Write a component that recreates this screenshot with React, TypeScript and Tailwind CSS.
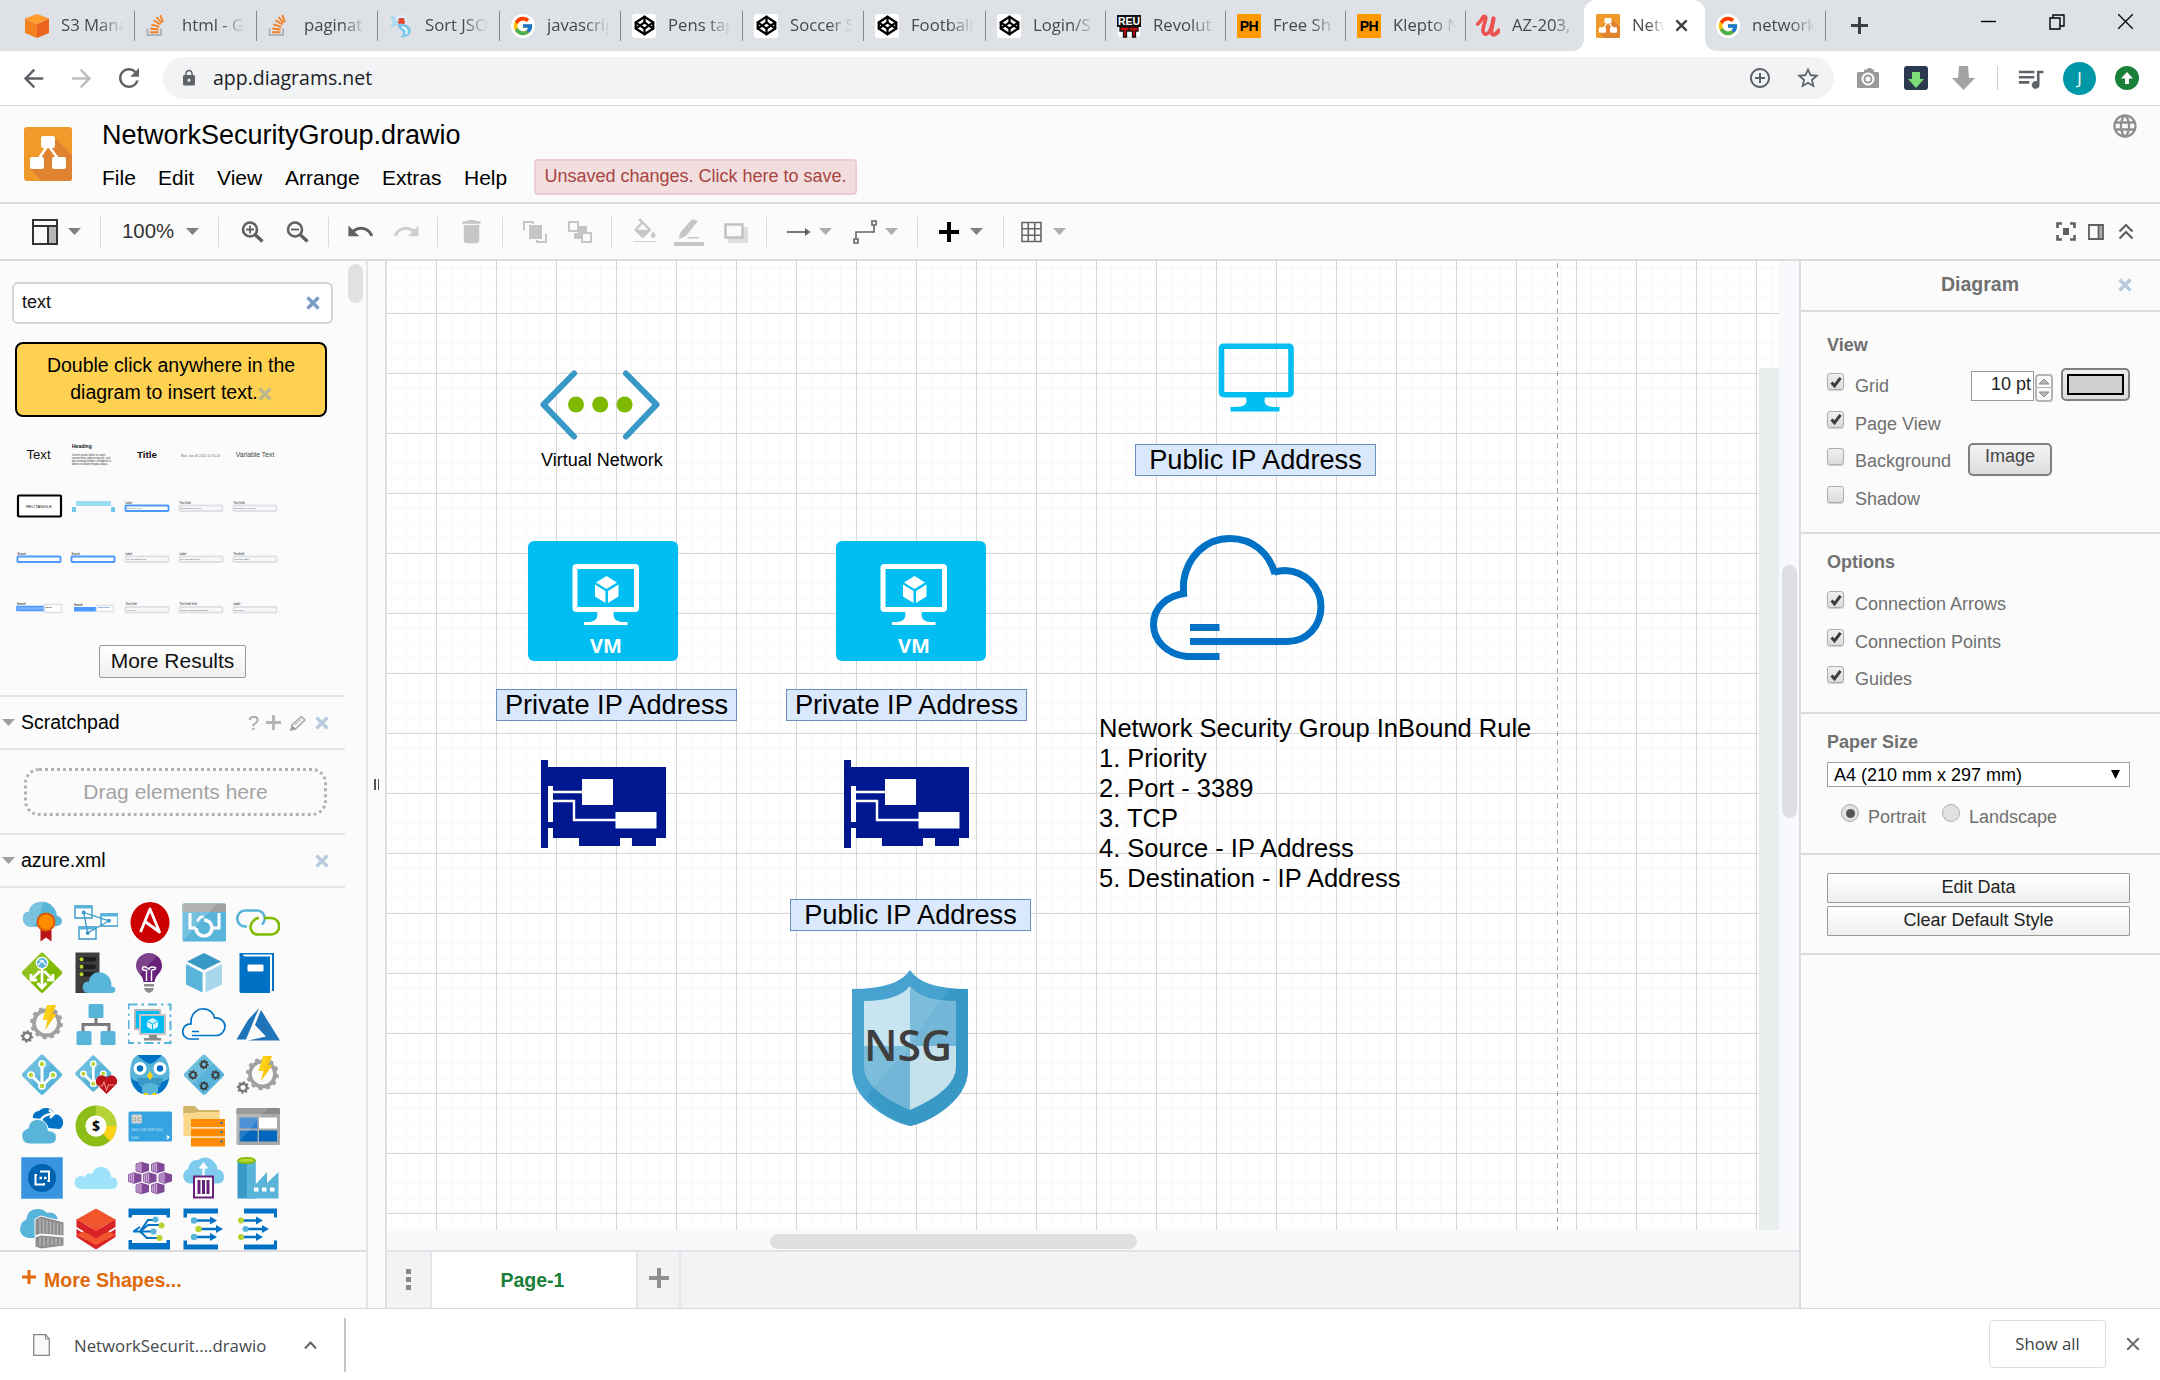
import React from "react";
import {
  MdArrowBack, MdArrowForward, MdRefresh, MdLock, MdStarBorder, MdQueueMusic, MdAddCircleOutline,
  MdLanguage, MdUndo, MdRedo, MdDelete, MdClose, MdFormatColorFill,
} from "react-icons/md";
import { FcGoogle } from "react-icons/fc";
import { FiCodepen } from "react-icons/fi";

type Kids = { children?: React.ReactNode };

/* ---------- Favicons ---------- */

const DrawioMark = ({ className }: { className: string }) => (
  <svg className={className} viewBox="0 0 48 54" preserveAspectRatio="none">
    <rect width="48" height="54" rx="3" fill="#f19a2c" />
    <path d="M30 10L48 28V51a3 3 0 0 1-3 3H17L7 42l16-20z" fill="#e08330" />
    <path d="M24 18L14 33M24 18l11 15" stroke="#fff" strokeWidth="2.6" />
    <rect x="17" y="9" width="14" height="12" rx="2" fill="#fff" />
    <rect x="6" y="30" width="14" height="12" rx="2" fill="#fff" />
    <rect x="28" y="30" width="14" height="12" rx="2" fill="#fff" />
  </svg>
);

const S3Icon = () => (
  <svg className="size-6" viewBox="0 0 24 24">
    <path d="M12 0l12 4.5-12 6L0 4.5z" fill="#ff9c2a" />
    <path d="M0 4.5l12 6V24L0 19z" fill="#f58220" />
    <path d="M24 4.5l-12 6V24l12-5z" fill="#ea6420" />
  </svg>
);
const StackIcon = () => (
  <svg className="size-6" viewBox="0 0 24 24" fill="none">
    <path d="M1.500 14.500V21h13.500v-6.500" stroke="#b0b3b8" strokeWidth="2" />
    <path d="M4.200 18.200h8.300M4.300 14.500l8.300 1M5.300 10.300l8 2.500M7.500 6.300l7 4.200M10.500 3l5 6M14.200 1.200l2.800 7" stroke="#f48024" strokeWidth="1.900" />
  </svg>
);
const GenieIcon = () => (
  <svg className="size-6" viewBox="0 0 24 24">
    <path d="M1 1l6 2-2 4 5-1-3 6-6 2 3-6z" fill="#a9dbf2" />
    <path d="M8 2c2-2 7-2 9 0l1 5-4 4-5-3z" fill="#d9eef8" />
    <path d="M10 4h5l1 5-3 3-4-3z" fill="#e4462f" />
    <path d="M9 10c7-1 12 2 13 6 0 6-6 8-11 7 3-1 4-4 2-6s-5-4-4-7z" fill="#7cc7ec" />
    <path d="M13 13c4 1 6 4 4 7" stroke="#fff" strokeWidth="1.800" fill="none" />
  </svg>
);
const GoogleIcon = () => (
  <span className="flex size-6 items-center justify-center rounded-full bg-white"><FcGoogle className="size-[22px]" /></span>
);
const CodepenIcon = () => (
  <span className="flex size-6 items-center justify-center rounded-[3px] bg-white"><FiCodepen className="size-[21px] text-black" strokeWidth={2.600} /></span>
);
const RevIcon = () => (
  <svg className="size-6" viewBox="0 0 24 24">
    <path d="M0 1h24v12H0z" fill="#111" />
    <path d="M1 13h22v9.500H1z" fill="#fff" />
    <text x="12" y="11" fontSize="10.500" fontWeight="900" textAnchor="middle" fill="#fff" fontFamily="Liberation Sans, sans-serif">REU</text>
    <path d="M3 13h9v4H9.500v6h-3v-6H3zM12 13h9v4h-2.500v6h-3v-6H12z" fill="#c60b0b" stroke="#111" strokeWidth="1.300" />
  </svg>
);
const PhIcon = () => (
  <span className="flex size-6 items-center justify-center bg-[#ff9900] font-['Liberation_Sans',sans-serif] text-[14px] font-bold leading-none tracking-[-0.500px] text-black">PH</span>
);
const UdemyIcon = () => (
  <svg className="size-6" viewBox="0 0 24 24" fill="none">
    <path d="M1.500 10c2.500-1.500 4-4 5.500-7 1.500-1.500 3.500-.5 2.500 2.500L7.500 13c-1.500 6 1 8.500 4 6.500 3-2 4-7 5-10" stroke="#ec5252" strokeWidth="3.600" strokeLinecap="round" />
    <path d="M17.500 4.500L15.500 15c-.6 4 .5 6 3 5.500 2-.5 3.500-2.500 4.500-4" stroke="#ec5252" strokeWidth="4.200" strokeLinecap="round" />
  </svg>
);

const CloseGlyph = ({ className }: { className: string }) => (
  <svg className={className} viewBox="0 0 14 14"><path d="M1.500 1.500l11 11M12.500 1.500l-11 11" stroke="currentColor" strokeWidth="2.500" /></svg>
);

const Tab = ({ icon, children, width = "w-[121px]" }: Kids & { icon: React.ReactNode; width?: string }) => (
  <div className={`flex h-full shrink-0 items-center ${width}`}>
    <span className="ml-[11px] flex size-6 shrink-0">{icon}</span>
    <span className="mb-0.5 ml-3 shrink-0 whitespace-nowrap text-[16.7px] text-[#45494d] [mask-image:linear-gradient(to_right,#000_38px,transparent_63px)]">{children}</span>
    <span className="ml-auto h-[30px] w-[1.5px] bg-[#85898e]" />
  </div>
);

const TabStrip = () => (
  <div className="flex h-[51px] shrink-0 items-center bg-[#dee1e6] pl-[14px]">
    <Tab icon={<S3Icon />}>S3 Mana</Tab>
    <Tab icon={<StackIcon />} width="w-[122px]">html - G</Tab>
    <Tab icon={<StackIcon />}>paginat</Tab>
    <Tab icon={<GenieIcon />} width="w-[122px]">Sort JSO</Tab>
    <Tab icon={<GoogleIcon />}>javascrip</Tab>
    <Tab icon={<CodepenIcon />} width="w-[122px]">Pens tag</Tab>
    <Tab icon={<CodepenIcon />}>Soccer S</Tab>
    <Tab icon={<CodepenIcon />} width="w-[122px]">Football</Tab>
    <Tab icon={<CodepenIcon />} width="w-[120px]">Login/S</Tab>
    <Tab icon={<RevIcon />} width="w-[120px]">Revolut</Tab>
    <Tab icon={<PhIcon />} width="w-[120px]">Free Sh</Tab>
    <Tab icon={<PhIcon />} width="w-[120px]">Klepto N</Tab>
    <div className="flex h-full w-[118px] items-center">
      <span className="ml-[10px] flex size-6"><UdemyIcon /></span>
      <span className="mb-0.5 ml-3 whitespace-nowrap text-[16.7px] text-[#45494d] [mask-image:linear-gradient(to_right,#000_42px,transparent_64px)]">AZ-203,</span>
    </div>
    <div className="relative flex h-full w-[121px] items-center rounded-t-[12px] bg-white">
      <svg className="absolute -left-3 bottom-0 size-3" viewBox="0 0 12 12"><path d="M12 0v12H0A12 12 0 0 0 12 0z" fill="#fff" /></svg>
      <svg className="absolute -right-3 bottom-0 size-3" viewBox="0 0 12 12"><path d="M0 0v12h12A12 12 0 0 1 0 0z" fill="#fff" /></svg>
      <DrawioMark className="ml-3 size-6 shrink-0" />
      <span className="mb-0.5 ml-3 w-[43px] shrink-0 whitespace-nowrap text-[16.7px] text-[#45494d] [mask-image:linear-gradient(to_right,#000_17px,transparent_33px)]">Netw</span>
      <CloseGlyph className="size-[13px] text-[#3c4043]" />
    </div>
    <Tab icon={<GoogleIcon />}>network</Tab>
    <svg className="ml-[25px] size-[17px]" viewBox="0 0 17 17"><path d="M8.500 0v17M0 8.500h17" stroke="#3c4043" strokeWidth="3" /></svg>
    <div className="ml-auto flex items-center pb-2">
      <svg className="h-5 w-[16px]" viewBox="0 0 16 20"><path d="M0 9.500h15" stroke="#000" strokeWidth="1.400" /></svg>
      <svg className="ml-[52px] size-4" viewBox="0 0 16 16" fill="none" stroke="#000" strokeWidth="1.400"><path d="M1 4h10v11H1zM4 4V1h11v11h-4" /></svg>
      <svg className="ml-[53px] mr-[27px] size-[15px]" viewBox="0 0 15 15" stroke="#000" strokeWidth="1.300"><path d="M0 0l15 15M15 0L0 15" /></svg>
    </div>
  </div>
);

const NavBar = () => (
  <div className="flex h-[55px] shrink-0 items-center border-b border-[#dadce0] bg-white pl-[9px] text-[#5f6368]">
    <span className="flex w-12 justify-center"><MdArrowBack className="size-[29px]" /></span>
    <span className="flex w-12 justify-center"><MdArrowForward className="size-[29px] text-[#bbbdc0]" /></span>
    <span className="flex w-12 justify-center"><MdRefresh className="size-[30px]" /></span>
    <div className="ml-[10px] flex h-[42px] w-[1671px] items-center rounded-full bg-[#f1f3f4]">
      <MdLock className="ml-[17px] size-[18px]" />
      <span className="ml-[15px] text-[19.5px] text-[#202124]">app.diagrams.net</span>
      <span className="ml-auto mr-[19px] flex items-center gap-[23px]">
        <MdAddCircleOutline className="size-6" />
        <MdStarBorder className="mr-[-6px] size-[26px]" />
      </span>
    </div>
    <span className="ml-4 flex w-9 justify-center">
      <svg className="h-5 w-[22px]" viewBox="0 0 22 20"><path d="M1 4h6V1.500h3L11 0h3l1 1.500h2V4h4q1 0 1 1v14q0 1-1 1H1q-1 0-1-1V5q0-1 1-1z" fill="#9a9a9a" /><circle cx="11" cy="11" r="5.500" fill="none" stroke="#fff" strokeWidth="2" /><circle cx="11" cy="11" r="2.500" fill="#fff" /></svg>
    </span>
    <span className="flex w-[60px] justify-center">
      <svg className="size-6" viewBox="0 0 24 24"><rect width="24" height="24" rx="3" fill="#2c3a4f" /><path d="M8 6h8v7h4l-8 9-8-9h4z" fill="#7ddc7a" /></svg>
    </span>
    <span className="flex w-[35px] justify-center">
      <svg className="h-6 w-[23px]" viewBox="0 0 23 24"><path d="M7 0h9l1 12h6L11.500 24 0 12h6z" fill="#a3a3a3" /></svg>
    </span>
    <span className="ml-4 h-6 w-px bg-[#d0d0d0]" />
    <span className="flex w-16 justify-center"><MdQueueMusic className="size-[31px]" /></span>
    <span className="flex w-[35px] justify-center"><span className="flex size-[33px] items-center justify-center rounded-full bg-[#0097a7] text-[17px] text-white">J</span></span>
    <span className="flex w-[60px] justify-center">
      <svg className="size-6" viewBox="0 0 24 24"><circle cx="12" cy="12" r="12" fill="#188038" /><path d="M12 6l6 6.500h-4V18h-4v-5.500H6z" fill="#fff" /></svg>
    </span>
  </div>
);

const Header = () => (
  <div className="flex h-[98px] shrink-0 border-b-2 border-[#dadce0] bg-[#fbfbfb]">
    <DrawioMark className="ml-6 mt-[21px] h-[54px] w-12" />
    <div className="ml-[30px] mt-[12px] flex flex-col">
      <span className="text-[27px] leading-[34px] text-black">NetworkSecurityGroup.drawio</span>
      <div className="mt-[7px] flex h-9 items-center text-[21px] leading-9 text-black">
        <span className="w-[56px] pt-0.5">File</span>
        <span className="w-[59px] pt-0.5">Edit</span>
        <span className="w-[68px] pt-0.5">View</span>
        <span className="w-[97px] pt-0.5">Arrange</span>
        <span className="w-[82px] pt-0.5">Extras</span>
        <span className="w-[70px] pt-0.5">Help</span>
        <span className="flex h-9 w-[323px] items-center justify-center whitespace-nowrap rounded-[4px] border-2 border-[#ebccd1] bg-[#f2dede] pb-[3px] text-[18px] text-[#a94442]">Unsaved changes. Click here to save.</span>
      </div>
    </div>
    <MdLanguage className="ml-auto mr-[21px] mt-[6px] size-[28px] text-[#8f8f8f]" />
  </div>
);

/* ---------- Editor toolbar ---------- */

const Sep = ({ className }: { className: string }) => <span className={`h-[30px] w-px shrink-0 bg-[#dadada] ${className}`} />;
const Caret = ({ className }: { className: string }) => (
  <svg className={`h-[7px] w-[13px] shrink-0 ${className}`} viewBox="0 0 13 7"><path d="M0 0h13L6.500 7z" fill="currentColor" /></svg>
);
const Magnifier = ({ className, plus }: { className: string; plus?: boolean }) => (
  <svg className={`h-[22px] w-[23px] shrink-0 ${className}`} viewBox="0 0 23 22" fill="none" stroke="#606060">
    <circle cx="9" cy="8.500" r="7" strokeWidth="2.600" />
    <path d="M14 13.500l7.500 7" strokeWidth="3.400" />
    <path d={plus ? "M5 8.500h8M9 4.500v8" : "M5 8.500h8"} strokeWidth="1.800" />
  </svg>
);

const Toolbar = () => (
  <div className="flex h-[57px] shrink-0 items-center border-b-2 border-[#dadce0] bg-[#fbfbfb] pl-8 text-[#606060]">
    <svg className="h-[26px] w-[26px] shrink-0" viewBox="0 0 26 26" fill="none" stroke="#333" strokeWidth="2"><path d="M17 8h8v17h-8z" fill="#b5b5b5" stroke="none" /><path d="M1 1h24v24H1zM1 7h24M16 7v18" /></svg>
    <Caret className="ml-[10px] text-[#808080]" />
    <Sep className="ml-[19px]" />
    <span className="ml-[21px] w-[54px] text-[20.400px] text-[#333]">100%</span>
    <Caret className="ml-[10px] text-[#808080]" />
    <Sep className="ml-[19px]" />
    <Magnifier className="ml-[22px]" plus />
    <Magnifier className="ml-[22px]" />
    <Sep className="ml-[19px]" />
    <MdUndo className="ml-[17px] size-[29px] shrink-0" />
    <MdRedo className="ml-[17px] size-[29px] shrink-0 text-[#cfcfcf]" />
    <Sep className="ml-[16px]" />
    <MdDelete className="ml-[18px] size-[31px] shrink-0 text-[#c6c6c6]" />
    <Sep className="ml-[15px]" />
    <svg className="ml-[19px] h-6 w-[26px] shrink-0" viewBox="0 0 26 24"><path d="M7 5h13v14H7z" fill="#c6c6c6" /><path d="M2 10V2h9v2M24 14v8h-9v-2" fill="none" stroke="#c6c6c6" strokeWidth="2" /></svg>
    <svg className="ml-[19px] h-6 w-[26px] shrink-0" viewBox="0 0 26 24"><path d="M11 6h9v6h-5v7H7v-6h4z" fill="#c6c6c6" /><path d="M2 2h9v9H2zM15 13h9v9h-9z" fill="#fbfbfb" stroke="#c6c6c6" strokeWidth="2" /></svg>
    <Sep className="ml-[18px]" />
    <MdFormatColorFill className="ml-[19px] h-[30px] w-[28px] shrink-0 text-[#c6c6c6] [clip-path:inset(0_0_15%_0)]" />
    <svg className="ml-[15px] h-[28px] w-[30px] shrink-0" viewBox="0 0 30 28"><path d="M18 1l6 2-12 15-7 3 1-6zM0 24h30v4H0zM14 19h11v1.500H13z" fill="#c6c6c6" /></svg>
    <svg className="ml-[20px] mt-[3px] h-[20px] w-[25px] shrink-0" viewBox="0 0 25 20"><path d="M4 4h20v16H4z" fill="#dedede" /><path d="M1.500 1.500h17v13h-17z" fill="#fbfbfb" stroke="#c2c2c2" strokeWidth="2.500" /></svg>
    <Sep className="ml-[17px]" />
    <svg className="ml-[20px] h-[12px] w-6 shrink-0" viewBox="0 0 24 12"><path d="M0 6h20" stroke="#606060" strokeWidth="1.700" /><path d="M18 2l5.500 4-5.500 4z" fill="#606060" /></svg>
    <Caret className="ml-2 text-[#adadad]" />
    <svg className="ml-[21px] h-6 w-[26px] shrink-0" viewBox="0 0 26 24" fill="none" stroke="#666" strokeWidth="1.600"><path d="M3 19v-7h18V5M1 19h4v4H1zM19 1h4v4h-4z" /></svg>
    <Caret className="ml-[6px] text-[#adadad]" />
    <Sep className="ml-[19px]" />
    <svg className="ml-[20px] size-[22px] shrink-0" viewBox="0 0 22 22"><path d="M9 1h4v8h8v4h-8v8H9v-8H1V9h8z" fill="#000" /></svg>
    <Caret className="ml-[10px] text-[#808080]" />
    <Sep className="ml-[20px]" />
    <svg className="ml-[17px] size-[22px] shrink-0" viewBox="0 0 22 22" fill="none" stroke="#666" strokeWidth="1.600"><path d="M1 1.500h19v19H1zM1 7.800h19M1 14.200h19M7.300 1.500v19M13.700 1.500v19" /></svg>
    <Caret className="ml-[10px] text-[#adadad]" />
    <svg className="ml-auto h-[19px] w-5 shrink-0" viewBox="0 0 20 19"><path d="M1.500 6V1.500H6M14 1.500h4.500V6M18.500 13v4.500H14M6 17.500H1.500V13" fill="none" stroke="#606060" strokeWidth="2.600" /><path d="M7 6h6v7H7z" fill="#606060" /></svg>
    <svg className="ml-[12px] size-4 shrink-0" viewBox="0 0 16 16"><path d="M11 1h4v14h-4z" fill="#aaa" /><path d="M1 1h14v14H1zM10.500 1v14" fill="none" stroke="#606060" strokeWidth="1.800" /></svg>
    <svg className="ml-[14px] mr-[26px] h-[17px] w-4 shrink-0" viewBox="0 0 16 17" fill="none" stroke="#606060" strokeWidth="2.200"><path d="M1.500 8.500L8 2l6.500 6.500M1.500 15.500L8 9l6.500 6.500" /></svg>
  </div>
);

/* ---------- Sidebar ---------- */

const Cross = ({ className }: { className: string }) => (
  <svg className={`shrink-0 ${className}`} viewBox="0 0 14 14"><path d="M1.500 1.500l11 11M12.500 1.500l-11 11" stroke="currentColor" strokeWidth="3.400" /></svg>
);

const Thumb = ({ children }: Kids) => (
  <svg className="h-[50px] w-[54px]" viewBox="0 0 54 50" fontFamily="Liberation Sans, sans-serif">{children}</svg>
);

const Field = ({ y, label, value, blue = false, x = 5.5, w = 43 }: { y: number; label: string; value?: string; blue?: boolean; x?: number; w?: number }) => (
  <>
    <text x={x} y={y - 2} fontSize="2.600" fontWeight="bold" fill="#555">{label}</text>
    <rect x={x} y={y} width={w} height="5.500" rx="0.800" fill={blue ? "#fff" : "#f7f8fa"} stroke={blue ? "#4c9aff" : "#dfe1e6"} strokeWidth="1.900" />
    {value ? <text x={x + 1} y={y + 3.5} fontSize="2.500" fill="#555">{value}</text> : null}
  </>
);

const Thumbs = () => (
  <div className="ml-3 mt-[13px] grid h-[200px] w-[270px] grid-cols-5">
    <Thumb><text x="26.500" y="28.500" fontSize="13.200" textAnchor="middle" fill="#111">Text</text></Thumb>
    <Thumb>
      <text x="6" y="18" fontSize="5" fontWeight="bold" fill="#111">Heading</text>
      <g fontSize="2.700" fill="#333">
        <text x="6" y="26" textLength="34">Lorem ipsum dolor sit amet,</text>
        <text x="6" y="29" textLength="38">consectetur adipisicing elit, sed</text>
        <text x="6" y="32" textLength="39">do eiusmod tempor incididunt ut</text>
        <text x="6" y="35" textLength="36">labore et dolore magna aliqua.</text>
      </g>
    </Thumb>
    <Thumb><text x="27" y="28" fontSize="9.800" fontWeight="bold" textAnchor="middle" fill="#111">Title</text></Thumb>
    <Thumb><text x="7" y="26.500" fontSize="3" fill="#666" textLength="39">Mon Jan 06 2020 10:55:24</text></Thumb>
    <Thumb><text x="27" y="27" fontSize="6.800" textAnchor="middle" fill="#444">Variable Text</text></Thumb>

    <Thumb>
      <rect x="6" y="15.500" width="43" height="21" rx="1" fill="#fff" stroke="#000" strokeWidth="2.200" />
      <text x="14" y="27.500" fontSize="4.400" fill="#222" textLength="26">RECTANGLE</text>
    </Thumb>
    <Thumb><path d="M10 21h35v5H10z" fill="#9adcf2" /><path d="M6 27h4v5H6zM45 27h4v5h-4z" fill="#6fcbe6" /></Thumb>
    <Thumb><Field y={25.5} label="Label" value="Selected Text" blue /></Thumb>
    <Thumb><Field y={25.5} label="Text field" value="Descriptive Placeh" /></Thumb>
    <Thumb><Field y={25.5} label="Text field" value="Descriptive Placeh" /></Thumb>

    <Thumb><Field y={26.5} label="Search" blue /></Thumb>
    <Thumb><Field y={26.5} label="Search" blue /></Thumb>
    <Thumb><Field y={26.5} label="Label" value="eg. 20/1/2020 am" /></Thumb>
    <Thumb><Field y={26.5} label="Label" value="eg. 20/1/2020 am" /></Thumb>
    <Thumb><Field y={26.5} label="Textfield" value="Normal State" /></Thumb>

    <Thumb>
      <text x="5" y="25" fontSize="2.600" fontWeight="bold" fill="#444">Search</text>
      <rect x="5" y="26.500" width="28" height="4" fill="#7ab3ff" stroke="#4c9aff" strokeWidth="1.500" />
      <rect x="32.500" y="24.500" width="17" height="8" fill="#fff" stroke="#dfe1e6" strokeWidth="1.500" />
      <text x="33.500" y="27.500" fontSize="2.400" fontWeight="bold" fill="#444">Menu</text>
    </Thumb>
    <Thumb>
      <rect x="8" y="27" width="22" height="4.500" fill="#4c9aff" />
      <text x="8" y="26" fontSize="2.600" fontWeight="bold" fill="#444">Search</text>
      <rect x="30.500" y="25.500" width="17" height="6" fill="#fff" stroke="#dfe1e6" strokeWidth="1.400" />
      <path d="M32 27.500h12" stroke="#9bbcec" />
    </Thumb>
    <Thumb><Field y={27} label="Text field" value="Help txt" /></Thumb>
    <Thumb><Field y={27} label="Text field field" value="Simple nothing disabling" /></Thumb>
    <Thumb><Field y={27} label="Label" value="Text field" /></Thumb>
  </div>
);

const A = ({ children }: Kids) => <svg className="size-11" viewBox="0 0 44 44" fill="none">{children}</svg>;

const Gear = ({ x, y, r, w, c, n, tw }: { x: number; y: number; r: number; w: number; c: string; n: number; tw: number }) => (
  <g transform={`translate(${x} ${y})`} fill={c}>
    <circle r={r} fill="none" stroke={c} strokeWidth={w} />
    {Array.from({ length: n }, (_, i) => (
      <rect key={i} x={-tw / 2} y={-r - w} width={tw} height={w} transform={`rotate(${(360 / n) * i + 8})`} />
    ))}
  </g>
);
const GearBolt = () => (
  <A>
    <Gear x={26.5} y={21} r={12.5} w={3.8} c="#a0a1a2" n={12} tw={4} />
    <Gear x={7} y={34.5} r={3.8} w={2.4} c="#7a7a7a" n={8} tw={2.2} />
    <path d="M27 3h9l-3.500 9h4L25 28l2.500-10h-5z" fill="#fcd116" />
    <path d="M32 3h4l-3.500 9h4L25 28z" fill="#f7b50c" opacity=".45" />
  </A>
);
const Diamond = ({ fill }: { fill: string }) => (
  <>
    <path d="M20.500 2.200q1.500-1.500 3 0l18 18q1.500 1.500 0 3l-18 18q-1.500 1.500-3 0l-18-18q-1.500-1.500 0-3z" fill={fill} />
    <path d="M20.500 2.200q1.500-1.500 3 0l8 8-21 21-8-8q-1.500-1.500 0-3z" fill="#fff" opacity=".12" />
  </>
);
const GitNodes = () => (
  <>
    <path d="M22 11v22M11 22l11 11 11-11" stroke="#fff" strokeWidth="3" />
    <g fill="#b8d432" stroke="#fff" strokeWidth="1.600"><circle cx="22" cy="11" r="3" /><circle cx="22" cy="33" r="3" /><circle cx="11" cy="22" r="3" /><circle cx="33" cy="22" r="3" /></g>
  </>
);
const HexBox = ({ x, y }: { x: number; y: number }) => (
  <g transform={`translate(${x} ${y})`}>
    <path d="M0 2l6-2v11l-6-2z" fill="#c9a6d4" stroke="#804998" strokeWidth=".8" />
    <path d="M2 2v7M4 1.500v8.500" stroke="#804998" strokeWidth=".6" />
    <path d="M6 0l7 2v7l-7 2z" fill="#804998" />
  </g>
);
const Brackets = ({ d1, d2 }: { d1: string; d2: string }) => <path d={d1 + d2} fill="#0072c6" />;

const AzureGrid = () => (
  <div className="ml-[14.700px] mt-2 grid w-[270px] auto-rows-[51.200px] grid-cols-5 place-items-center">
    <A>
      <path d="M10 27A8.500 8.500 0 0 1 6 12Q8 12 9 11.500C10 1 27-2 34 8q3 4 3 8a5 5 0 0 1 0 10z" fill="#59b4d9" />
      <path d="M10 27A8.500 8.500 0 0 1 6 12Q8 12 9 11.500C10 5 18 1 24 2L14 27z" fill="#fff" opacity=".2" />
      <path d="M20.500 30v11.500l5.500-4 5.500 4V30z" fill="#ba141a" />
      <circle cx="26" cy="22" r="8.500" fill="#ff8c00" stroke="#dd5900" strokeWidth="2" />
    </A>
    <A>
      <g fill="#fff" stroke="#3999c6" strokeWidth="1.400"><path d="M1 6h17v12H1zM27 14h17v12H27zM5 27h17v12H5z" /></g>
      <path d="M1 7h17M27 15h17M5 28h17" stroke="#59b4d9" strokeWidth="3" />
      <path d="M9.700 12.500L35 20.800M9.700 12.500L13.700 33M35 20.800L13.700 33" stroke="#3999c6" strokeWidth="1.300" />
      <g fill="#3999c6"><circle cx="9.700" cy="12.500" r="2" /><circle cx="35" cy="20.800" r="2" /><circle cx="13.700" cy="33" r="2" /></g>
    </A>
    <A>
      <ellipse cx="22" cy="22.500" rx="19.500" ry="20.500" fill="#c00" />
      <path d="M12.500 32L22 9l9.500 23L17 21.500" stroke="#fff" strokeWidth="2.800" strokeLinejoin="round" />
    </A>
    <A>
      <rect x=".5" y="3.500" width="43.500" height="38" rx="1.500" fill="#59b4d9" />
      <path d="M.5 12V5q0-1.500 1.500-1.500h40.500Q44 3.500 44 5v7z" fill="#a0a1a2" />
      <path d="M8 13v15h6M37 13v15h-6" stroke="#fff" strokeWidth="3" />
      <path d="M14 28a8 8 0 1 0 8-8" stroke="#fff" strokeWidth="3.600" />
      <path d="M15.500 21.500a7 7 0 0 1 6-5" stroke="#fff" strokeWidth="2.600" />
      <path d="M.5 41.500V5q0-1.500 1.500-1.500h33z" fill="#fff" opacity=".18" />
    </A>
    <A>
      <path d="M11 26.500h-1.500A8 8 0 0 1 9 10.500h12a8 8 0 0 1 5 14" stroke="#59b4d9" strokeWidth="2.600" />
      <path d="M17 21.500a7.500 7.500 0 0 0 5 13h13a8 8 0 0 0 0-16.500h-7" stroke="#7fba00" strokeWidth="2.600" />
      <path d="M17 21.500q2-3.500 6-3.500" stroke="#7fba00" strokeWidth="2.600" />
    </A>

    <A>
      <Diamond fill="#7fba00" />
      <circle cx="22" cy="12" r="6.300" fill="#fff" /><circle cx="22" cy="12" r="5" fill="#59b4d9" />
      <path d="M18 14l4-4 4 4M19 9l5 1" stroke="#fff" strokeWidth="1.200" />
      <path d="M22 18v17M17.500 32l4.500 5 4.500-5M20 20l-7.500 7.500M24 20l7.500 7.500M11 23v6h6M33 23v6h-6" stroke="#fff" strokeWidth="2.800" />
    </A>
    <A>
      <path d="M1.500 1.500h24v40.500h-24z" fill="#3e3e3e" />
      <g fill="#1e1e1e"><rect x="5" y="6" width="17" height="4.500" rx="2" /><rect x="5" y="13.500" width="17" height="4.500" rx="2" /><rect x="5" y="21" width="17" height="4.500" rx="2" /></g>
      <g fill="#b8d432"><circle cx="7.500" cy="8.300" r="2" /><circle cx="7.500" cy="15.800" r="2" /><circle cx="7.500" cy="23.300" r="2" /></g>
      <path d="M13.500 42A5.800 5.800 0 0 1 14 30.500h1C16 17.500 36 18 37.500 33q0 2-.5 2.500h1.500a3.300 3.300 0 0 1 0 6.500z" fill="#59b4d9" />
    </A>
    <A>
      <path d="M21 2a13 13 0 0 1 13 13c0 7-6.500 8-7.500 16H15.500C14.500 23 8 22 8 15A13 13 0 0 1 21 2z" fill="#68217a" />
      <path d="M21 2C13 2 8 8 8 15c0 4 2 6 4 8L29 5q-4-3-8-3z" fill="#fff" opacity=".15" />
      <path d="M18.500 30V19M23.500 30V19M18.500 19q-4 1-4-1.500t3-1.500 3.500 3q0-3 3.500-3t3 1.500-4 1.500" stroke="#fff" strokeWidth="1.400" />
      <path d="M16 33h10v2.500H16zM16 37h10q-1 4-5 5-4-1-5-5z" fill="#8a8a8a" />
    </A>
    <A>
      <path d="M22 2l17 8.500L22 19 5 10.500z" fill="#3999c6" />
      <path d="M4 13l16.500 8.500V41.500L4 33.500z" fill="#59b4d9" />
      <path d="M40 13l-16.500 8.500V41.500L40 33.500z" fill="#a9d8ec" />
    </A>
    <A>
      <path d="M6 2h32v38h-3V5.500H7z" fill="#0072c6" />
      <path d="M3.500 2h3.500l2 4h25v36h-29q-1.500 0-1.500-2z" fill="#0072c6" />
      <path d="M7 3.500h29v36h-1.300V5H7.500z" fill="#fff" />
      <rect x="11.500" y="13.500" width="16" height="7" rx="1" fill="#fff" />
    </A>

    <GearBolt />
    <A>
      <path d="M22 15v7M9 30v-7.500h26V30" stroke="#7a7a7a" strokeWidth="3" />
      <g fill="#59b4d9"><rect x="14.500" y="2" width="15" height="14" rx="1.500" /><rect x="2.500" y="29" width="15" height="14" rx="1.500" /><rect x="26.500" y="29" width="15" height="14" rx="1.500" /></g>
    </A>
    <A>
      <rect x=".5" y="2.500" width="42" height="38.500" stroke="#59b4d9" strokeWidth="2" strokeDasharray="9 4 2.500 4" />
      <path d="M7 8h25v19H7z" fill="#00bcf2" stroke="#b5b5b5" strokeWidth="1.800" />
      <path d="M12 13h25v19H12z" fill="#00bcf2" stroke="#c5c5c5" strokeWidth="2" />
      <path d="M21 33h8v3h4v2.500H16V36h5z" fill="#8a8a8a" />
      <path d="M24.500 16l5.500 3v6l-5.500 3-5.500-3v-6z" fill="#d5f3fd" /><path d="M24.500 22v6M19 19l5.500 3 5.500-3" stroke="#00bcf2" />
    </A>
    <A>
      <path d="M17 37H7.500a7.500 7.500 0 0 1 1.500-15C8 10 17 6.500 21.500 6.800 28 7 32 12 32.500 16c6-.5 10.500 3.500 10.500 8.500 0 4-3.500 9-8.500 9H10M10 29.500h7" stroke="#0072c6" strokeWidth="1.700" />
    </A>
    <A>
      <path d="M23 6L12 18 0.500 37.500h9.500z" fill="#2074ba" />
      <path d="M25 8l-6 15 11 11.500-18 4h32z" fill="#2074ba" />
    </A>

    <A><Diamond fill="#59b4d9" /><GitNodes /></A>
    <A>
      <g transform="translate(-0.500 1) scale(.9)"><Diamond fill="#59b4d9" /><GitNodes /></g>
      <path d="M32.500 41L22.500 31a6 6 0 0 1 10-6.500 6 6 0 0 1 10 6.500z" fill="#ba141a" />
      <path d="M23 33h5l2-4 2.500 8 2-5h6" stroke="#e88" strokeWidth="1.200" />
    </A>
    <A>
      <path d="M5 6q3-4 8-4h17q5 0 8 4 5 10 3 20-2 15-19 16Q5 41 2.500 26 1 14 5 6z" fill="#59b4d9" />
      <path d="M9 2h25q-6 7-12 9Q16 9 9 2z" fill="#0072c6" />
      <path d="M2.500 24q3 14 12 17L14 30Q5 28 2.500 24zM41.500 24q-3 14-12 17l.5-11q9-2 11.500-6z" fill="#0072c6" />
      <path d="M9 25h26l-3 9H12z" fill="#3999c6" />
      <path d="M14 33q8-6 16 0v6q-8 5-16 0z" fill="#59b4d9" />
      <g><circle cx="12" cy="15.500" r="6.500" fill="#fff" /><circle cx="32" cy="15.500" r="6.500" fill="#fff" /><circle cx="12" cy="15.500" r="3.200" fill="#0072c6" /><circle cx="32" cy="15.500" r="3.200" fill="#0072c6" /></g>
      <path d="M19 23l3-5 3 5-3 4zM15 42q2-5 6 0zM23 42q4-5 6 0z" fill="#fcd116" />
    </A>
    <A>
      <Diamond fill="#59b4d9" />
      <Gear x={22} y={11.5} r={2.8} w={1.8} c="#3e3e3e" n={8} tw={1.8} />
      <Gear x={22} y={33} r={2.8} w={1.8} c="#3e3e3e" n={8} tw={1.8} />
      <Gear x={11} y={22} r={2.8} w={1.8} c="#3e3e3e" n={8} tw={1.8} />
      <Gear x={33.5} y={22} r={2.8} w={1.8} c="#3e3e3e" n={8} tw={1.8} />
    </A>
    <GearBolt />

    <A>
      <path d="M13 14a6 6 0 0 1 6-7C23 2 32 3 35 10c8 1 11 10 5 15l-12-1-6-9z" fill="#0072c6" />
      <path d="M20 17q4-7 12-7M29 6l5 4-4 4" stroke="#fff" strokeWidth="2.400" />
      <path d="M9 40A8 8 0 0 1 6 25q2-1 2.500-1C9 13 25 12 28 24q0 2 0 2.500Q36 27 36.500 33q0 7-7 7z" fill="#59b4d9" stroke="#fbfbfb" strokeWidth="1" />
    </A>
    <A>
      <circle cx="22" cy="22" r="15.500" stroke="#8cbd18" strokeWidth="10" />
      <path d="M22 6.500A15.500 15.500 0 0 1 37.500 22" stroke="#b5d334" strokeWidth="10" />
      <path d="M37.500 22a15.500 15.500 0 0 1-5 11.500" stroke="#fcd116" strokeWidth="10" />
      <circle cx="22" cy="22" r="10.500" fill="#fff" />
      <text x="22" y="27" fontSize="14" fontWeight="bold" textAnchor="middle" fill="#000" fontFamily="Open Sans, sans-serif">$</text>
    </A>
    <A>
      <rect x=".5" y="7.500" width="43.500" height="30" rx="1.500" fill="#35a3e0" />
      <rect x="3.500" y="10.500" width="10.500" height="9" rx="1.500" fill="#d5d5d5" /><path d="M3.500 14h4v3h-4M14 14h-4v3h4" stroke="#999" strokeWidth=".7" />
      <g fill="#cfeaf8" fontSize="3.200" fontFamily="Liberation Sans, sans-serif"><text x="3.500" y="27">4000 1234 5678 9010</text><text x="3.500" y="34.500">0000</text></g>
      <path d="M38.500 32q2.500 0 2.500 2M38.500 34.500h2" stroke="#fff" strokeWidth="1.400" />
    </A>
    <A>
      <path d="M1.500 2h11l4 4h21v6H1.500z" fill="#d1b36b" /><path d="M1.500 5h7l3 3h26v24h-36z" fill="#fcd98a" /><path d="M1.500 2h11l4 4-4 3H1.500z" fill="#d1b36b" />
      <path d="M9 15h34v27.500H9z" fill="#ff8c00" />
      <path d="M9 23.800h34M9 33.200h34" stroke="#fff" strokeWidth="1.300" />
      <path d="M39.500 18v2M39.500 27v2M39.500 36.500v2" stroke="#0072c6" strokeWidth="2" />
    </A>
    <A>
      <rect x=".5" y="4" width="43.500" height="37" rx="1.500" fill="#a8a9aa" />
      <path d="M.5 10V5.500Q.5 4 2 4h40.500Q44 4 44 5.500V10z" fill="#8a8a8a" />
      <path d="M3.500 13.500h18v11h-18z" fill="#2f80d0" /><path d="M23 13.500h18v11H23z" fill="#fff" /><path d="M3.500 26.500h18v11h-18zM23 26.500h18v11H23z" fill="#0067bd" />
      <path d="M.5 41V5.500Q.5 4 2 4h30z" fill="#fff" opacity=".15" />
    </A>

    <A>
      <path d="M1.500 1.500h41v41h-41z" fill="#3a93de" stroke="#68b0ea" />
      <circle cx="22" cy="22" r="14" fill="#0063b1" />
      <path d="M17 19h-1.500v9.500H24V27M20 15.500h9V25H27.500" stroke="#fff" strokeWidth="2" /><path d="M19.500 22h2.500M24 22h2.500" stroke="#fff" strokeWidth="2.600" />
    </A>
    <A><path d="M7 33a6.500 6.500 0 0 1 0-13q2 0 4 1c2-5 5-4 7-3 4-11 18-9 19 3q6 0 6.500 6 0 6-6 6z" fill="#9fe3fa" /></A>
    <A>
      <HexBox x={8} y={6} /><HexBox x={23.5} y={6} /><HexBox x={0.5} y={16.5} /><HexBox x={15.5} y={16.5} /><HexBox x={31} y={16.5} /><HexBox x={8} y={27} /><HexBox x={23.5} y={27} />
    </A>
    <A>
      <path d="M9 27.500A7.500 7.500 0 0 1 6 13q2-10 10-9 9-6 17 3 3 3 2 6 7 1 7 8t-7 6.500z" fill="#7ecbee" />
      <path d="M21.500 20V10M18 12.500L21.500 8l3.500 4.500" stroke="#fff" strokeWidth="2.400" />
      <path d="M12 20.500h19v21H12z" fill="#fff" stroke="#68217a" strokeWidth="2" />
      <path d="M17 24v14M21.500 24v14M26 24v14" stroke="#68217a" strokeWidth="3" />
    </A>
    <A>
      <path d="M1.500 4h18v38.500h-18z" fill="#3999c6" /><path d="M11 4h8.500v38.500H11z" fill="#59b4d9" />
      <path d="M19 30V29l12-13v11l11.500-11v26.500H19z" fill="#59b4d9" />
      <ellipse cx="10.500" cy="4.500" rx="8.500" ry="2.800" fill="#b8d432" stroke="#7fba00" strokeWidth="1.400" />
      <path d="M18 31.500h4.500v4H18zM26 31.500h4.500v4H26zM34 31.500h4.500v4H34z" fill="#fff" />
    </A>

    <A>
      <path d="M8 31Q0 29 0 22q1-8 6-9Q8 1 18 2q6 0 9 4 8-2 11 6L15 15v16z" fill="#59b4d9" />
      <g stroke="#fbfbfb" strokeWidth="1"><path d="M15 12l6-3 23 6v14l-23-2-6 2z" fill="#8e8e8e" /><path d="M15 30l6-2 23 2v9l-23 3-6-2z" fill="#8e8e8e" /></g>
      <path d="M20 12v15M23.500 12.500v14M27 13.500v13M30.500 14.500v13M34 15.500v12M37.500 16.500v11M41 17.500v11M20 30v9M24 30v9M28 30.500v8M32 31v7M36 31v7M40 31.500v6" stroke="#b9b9b9" strokeWidth="1.200" />
    </A>
    <A>
      <path d="M2.500 22v8L22 42.500 41.500 30v-8L22 34z" fill="#db2228" /><path d="M22 18l19.500 10L22 38 2.500 28z" fill="#f0552d" />
      <path d="M2.500 12v8L22 31.500 41.500 20v-8L22 24z" fill="#db2228" /><path d="M22 1.500L41.500 12.500 22 23.500 2.500 12.500z" fill="#f0552d" />
    </A>
    <A>
      <Brackets d1="M.5 1.500h41.500v9h-3.500V8H4v2.500H.5z" d2="M.5 42.500h41.500V33h-3.500v3H4v-3H.5z" />
      <path d="M5 24.500h7L20 13h7M12 24.500L20 18h13M12 24.500h13M12 24.500L19 31h12M6 24L12 20" stroke="#0072c6" strokeWidth="2" />
      <circle cx="27.500" cy="12.500" r="3" fill="#59b4d9" /><circle cx="33.500" cy="18.500" r="3" fill="#b8d432" /><circle cx="25.500" cy="24.500" r="3" fill="#59b4d9" /><circle cx="31.500" cy="31" r="3" fill="#b8d432" />
    </A>
    <A>
      <Brackets d1="M1.500 1.500H36v5H5v4H1.500z" d2="M1.500 42.500H36v-5H5v-4H1.500z" />
      <path d="M13 13.500h16M17 22h17M13 30h16" stroke="#0072c6" strokeWidth="2.400" />
      <path d="M28 9.500l7 4-7 4zM34 18l7 4-7 4zM28 26l7 4-7 4z" fill="#0072c6" />
      <circle cx="12" cy="13.500" r="3.200" fill="#59b4d9" /><circle cx="16.500" cy="22" r="3.200" fill="#b8d432" /><circle cx="12" cy="30" r="3.200" fill="#59b4d9" />
    </A>
    <A>
      <Brackets d1="M8 1.500h33v9h-3v-4H8z" d2="M8 42.500h33v-9h-3v4H8z" />
      <path d="M6 13.500h15M10 22h17M6 30h15" stroke="#0072c6" strokeWidth="2.400" />
      <path d="M20 9.500l7 4-7 4zM26 18l7 4-7 4zM20 26l7 4-7 4z" fill="#0072c6" />
      <circle cx="5" cy="13.500" r="3" fill="#b8d432" /><circle cx="9.500" cy="22" r="3" fill="#59b4d9" /><circle cx="5" cy="30" r="3" fill="#b8d432" />
    </A>
  </div>
);

const SectionHead = ({ title, children }: Kids & { title: string }) => (
  <div className="flex h-[55px] items-center border-y-2 border-[#e5e5e5]">
    <Caret className="ml-[2px] text-[#a0a0a0]" />
    <span className="ml-[6px] pt-px text-[19.5px] text-black">{title}</span>
    <span className="ml-auto mr-4 flex items-center text-[#a5a5a5]">
      {children}
      <Cross className="size-[14px] text-[#b9c9de]" />
    </span>
  </div>
);

const Sidebar = () => (
  <div className="flex w-[368px] shrink-0 flex-col border-r-2 border-[#e5e5e5] bg-[#fbfbfb]">
    <div className="flex h-[989px] overflow-hidden">
      <div className="flex w-[345px] shrink-0 flex-col">
        <div className="ml-3 mt-[21px] flex h-[42px] w-[321px] shrink-0 items-center rounded-[6px] border-2 border-[#d4d4d4] bg-white">
          <span className="ml-2 pb-px text-[18px] text-[#111]">text</span>
          <Cross className="ml-auto mr-[11px] size-[14px] text-[#7a9cc4]" />
        </div>
        <div className="ml-[15px] mt-[18px] flex h-[75px] w-[312px] shrink-0 flex-col items-center justify-center rounded-[8px] border-2 border-black bg-[#ffd150] pb-0.5 text-[19.5px] leading-[27px] text-black">
          <span>Double click anywhere in the</span>
          <span className="flex items-center">diagram to insert text.<Cross className="mt-1 size-[14px] text-[#bcb68c]" /></span>
        </div>
        <Thumbs />
        <div className="ml-[99px] mt-[15px] flex h-[33px] w-[147px] shrink-0 items-center justify-center rounded-[2px] border border-[#999] bg-gradient-to-b from-white to-[#efefef] pb-0.5 text-[21px] text-[#111]">More Results</div>
        <div className="mt-[17px] shrink-0">
          <SectionHead title="Scratchpad">
            <span className="text-[20px]">?</span>
            <svg className="ml-[7px] size-[15px]" viewBox="0 0 15 15"><path d="M6 0h3v6h6v3H9v6H6V9H0V6h6z" fill="#b5b5b5" /></svg>
            <svg className="ml-[9px] mr-[9px] size-4" viewBox="0 0 16 16"><path d="M11.500 1.500L15 5 6 13.500 1 15l1-5z" fill="none" stroke="#aaa" strokeWidth="1.500" /><path d="M1 15l.8-4.500L6 14zM5 10l6.500-6M7 12l6-5.500" fill="#999" stroke="#aaa" /></svg>
          </SectionHead>
        </div>
        <div className="ml-6 mt-[18px] flex h-12 w-[303px] shrink-0 items-center justify-center rounded-[15px] border-[3px] border-dotted border-[#b3b3b3] text-[21px] text-[#a3a3a3]">Drag elements here</div>
        <div className="mt-[17px] shrink-0"><SectionHead title="azure.xml" /></div>
        <AzureGrid />
      </div>
      <div className="ml-[3px] mt-[3px] h-[39px] w-[15px] rounded-[8px] bg-[#e1e1e1]" />
    </div>
    <div className="flex flex-1 items-center border-t-2 border-[#dcdce0] text-[19.5px] font-bold text-[#e0690c]">
      <svg className="mb-1.5 ml-[22px] size-[14px]" viewBox="0 0 14 14"><path d="M5.500 0h3v5.500H14v3H8.500V14h-3V8.500H0v-3h5.500z" fill="currentColor" /></svg>
      <span className="ml-2 pt-0.5">More Shapes...</span>
    </div>
  </div>
);

/* ---------- Diagram nodes ---------- */

const LabelBox = ({ at, children }: Kids & { at: string }) => (
  <div className={`absolute flex h-8 w-[241px] items-center justify-center whitespace-nowrap border-[1.500px] border-[#6c8ebf] bg-[#dae8fc] pb-px text-[27.200px] leading-none text-black ${at}`}>{children}</div>
);

const Vm = ({ at }: { at: string }) => (
  <svg className={`absolute h-[120px] w-[150px] ${at}`} viewBox="0 0 150 120">
    <rect width="150" height="120" rx="6" fill="#00bef2" />
    <rect x="47" y="25.500" width="61.500" height="43" rx="1.500" fill="none" stroke="#fff" strokeWidth="5" />
    <path d="M69 70h17q-2 9 5 10.500 2 .5 8.500.5v3H56v-3q6 0 8-.5 7-1.500 5-10.500z" fill="#fff" />
    <path d="M78.500 35L89 41.500 78.500 48 68 41.500z" fill="#fff" />
    <path d="M67 43.500L77.500 50v12L67 55.500zM90.500 43.500L80 50v12l10.500-6.500z" fill="#fff" />
    <text x="62" y="112" fontSize="19" fontWeight="700" fill="#fff" fontFamily="Open Sans, Noto Sans, sans-serif" textLength="32" lengthAdjust="spacingAndGlyphs">VM</text>
  </svg>
);

const Nic = ({ at }: { at: string }) => (
  <svg className={`absolute h-[88px] w-[126px] ${at}`} viewBox="0 0 126 88">
    <path d="M0 0h7v7h118v71h-10v8H91v-8H79v8H38v-8H12V68H7v20H0z" fill="#00188f" />
    <path d="M7 26h5v36H7z" fill="#fff" />
    <path d="M12 32h30M12 41h21v19h43" fill="none" stroke="#fff" strokeWidth="2.400" />
    <path d="M41 19h31v26H41zM74.500 52h41v16.500h-41z" fill="#fff" />
  </svg>
);

const Nsg = () => (
  <svg className="absolute left-[465px] top-[709px] h-[156px] w-[116px]" viewBox="0 0 116 156">
    <path d="M58 0q12 19 58 19v80q0 24-27 43-16 11-31 14-15-3-31-14Q0 123 0 99V19q46 0 58-19z" fill="#47a2cf" />
    <path d="M97 19h19v80q0 24-27 43-16 11-31 14-26-8-43-30z" fill="#3999c6" />
    <path d="M58 16v60H12V31q34 0 46-15z" fill="#c8e4f0" />
    <path d="M58 16q12 15 46 15v45H58z" fill="#7cbddc" />
    <path d="M12 76h46v64Q12 120 12 97z" fill="#7cbddc" />
    <path d="M104 76v21q0 23-46 43V76z" fill="#c4e1ec" />
    <path d="M87 31h17v45H58zM58 76v64Q30 128 22 117z" fill="#70b4d6" opacity=".8" />
    <text x="12" y="91" fontSize="43" fontWeight="600" fill="#3e3e3e" textLength="88" lengthAdjust="spacingAndGlyphs" fontFamily="Open Sans, Noto Sans, sans-serif">NSG</text>
  </svg>
);

const Canvas = () => (
  <div className="relative h-[969px] w-[1392px] shrink-0 overflow-hidden bg-white">
    <div className="absolute inset-0 bg-[position:-11.500px_-8.500px] bg-[size:15px_15px] bg-[linear-gradient(to_right,#f6f6f6_1.500px,transparent_1.500px),linear-gradient(to_bottom,#f6f6f6_1.500px,transparent_1.500px)]" />
    <div className="absolute inset-0 bg-[position:-11px_-8px] bg-[size:60px_60px] bg-[linear-gradient(to_right,#d6d6d6_1px,transparent_1px),linear-gradient(to_bottom,#d6d6d6_1px,transparent_1px)]" />
    <div className="absolute bottom-0 right-0 top-[107px] w-5 bg-[#e9eded]" />
    <div className="absolute bottom-0 left-[1170px] top-[2px] w-px bg-[repeating-linear-gradient(to_bottom,#a8a8a8_0_5px,transparent_5px_9px)]" />

    <svg className="absolute left-[152px] top-[109px] h-[70px] w-[122px]" viewBox="0 0 122 70" fill="none">
      <path d="M35 3.500L4.500 34.700 35 66.500M87 3.500l30.500 31.200L87 66.500" stroke="#3999c6" strokeWidth="6" strokeLinecap="round" strokeLinejoin="round" />
      <g fill="#7fba00"><circle cx="37" cy="34.500" r="8" /><circle cx="61.200" cy="34.500" r="8" /><circle cx="85.600" cy="34.500" r="8" /></g>
    </svg>
    <span className="absolute left-[154px] top-[187px] whitespace-nowrap text-[18px] leading-6 text-black">Virtual Network</span>

    <svg className="absolute left-[830.500px] top-[82px] h-[69px] w-[76px]" viewBox="0 0 76 69">
      <rect x="3.500" y="3.200" width="69.500" height="48.500" rx="2" fill="none" stroke="#00bef2" strokeWidth="5.600" />
      <path d="M27.500 53h20q-3 8 3 10 3 1 11 1v4.500h-49V64q9 0 12-1 6-2 3-10z" fill="#00bef2" />
    </svg>
    <LabelBox at="left-[748px] top-[183px]">Public IP Address</LabelBox>

    <svg className="absolute left-[763px] top-[273px] h-[127px] w-[175px]" viewBox="0 0 175 127" fill="none" stroke="#0072c6" strokeWidth="7">
      <path d="M69.500 122.500H36.500C16 120 3.500 106 3.500 90.500 3.500 74 16 61.500 37 59M33.500 60V48C37 23 55 4.500 80 4.500 103 4.500 119 19 125 40M124 38.200C128 37 132 36.500 135 36.500 156 37 171 54 171 72.500 171 92 157 107.500 137 107.500H40M40 93.500h29.500" />
    </svg>

    <Vm at="left-[141px] top-[280px]" />
    <Vm at="left-[448.500px] top-[280px]" />
    <LabelBox at="left-[109px] top-[428px]">Private IP Address</LabelBox>
    <LabelBox at="left-[399px] top-[428px]">Private IP Address</LabelBox>
    <Nic at="left-[154px] top-[499px]" />
    <Nic at="left-[457px] top-[499px]" />
    <LabelBox at="left-[403px] top-[638px]">Public IP Address</LabelBox>
    <Nsg />

    <div className="absolute left-[712px] top-[452px] flex flex-col whitespace-nowrap text-[25.500px] leading-[30px] text-black">
      <span>Network Security Group InBound Rule</span>
      <span>1. Priority</span>
      <span>2. Port - 3389</span>
      <span>3. TCP</span>
      <span>4. Source - IP Address</span>
      <span>5. Destination - IP Address</span>
    </div>
  </div>
);

const Workspace = () => (
  <div className="flex w-[1412px] shrink-0 flex-col">
    <div className="flex">
      <Canvas />
      <div className="w-5 bg-[#f8f9fc]"><div className="ml-[3px] mt-[304px] h-[253px] w-[15px] rounded-[8px] bg-[#dedfe2]" /></div>
    </div>
    <div className="h-5 bg-[#f8f9fb] pt-1"><div className="ml-[383px] h-[15px] w-[367px] rounded-[8px] bg-[#dedfe0]" /></div>
    <div className="flex flex-1 border-t-2 border-[#e0e2e5] bg-[#f1f3f4]">
      <div className="flex w-[43px] flex-col items-center justify-center gap-[3px] pb-0.5">
        <span className="size-[5px] bg-[#8a8a8a]" /><span className="size-[5px] bg-[#8a8a8a]" /><span className="size-[5px] bg-[#8a8a8a]" />
      </div>
      <div className="flex w-[208px] items-center justify-center border-x-2 border-[#e5e6ea] bg-white pr-[3px] pt-0.5 text-[19.5px] font-bold text-[#188038]">Page-1</div>
      <div className="flex w-[43px] items-center justify-center border-r-2 border-[#e5e6ea] pb-1">
        <svg className="size-5" viewBox="0 0 20 20"><path d="M8 0h4v8h8v4h-8v8H8v-8H0V8h8z" fill="#8f8f8f" /></svg>
      </div>
    </div>
  </div>
);

/* ---------- Format panel ---------- */

const Check = ({ on, label, children }: Kids & { on?: boolean; label: string }) => (
  <div className="flex h-[37.500px] items-center">
    <span className="mb-2 flex size-[17px] shrink-0 items-center justify-center rounded-[3px] border-[1.500px] border-[#aeaeae] bg-gradient-to-b from-[#f0f0f0] to-[#dcdcdc] shadow-[0_1px_1px_#d0d0d0]">
      {on ? <svg className="size-3" viewBox="0 0 12 12"><path d="M1.500 6.500l3 3.300L10.500 1.800" fill="none" stroke="#3c3c3c" strokeWidth="3" /></svg> : null}
    </span>
    <span className="ml-[11px] pt-0.5 text-[18px]">{label}</span>
    {children}
  </div>
);

const Title = ({ children }: Kids) => <div className="text-[18px] font-bold leading-6">{children}</div>;
const PanelButton = ({ children }: Kids) => (
  <div className="flex h-[30px] w-[303px] items-center justify-center rounded-[1px] border border-[#999] bg-gradient-to-b from-white to-[#efefef] pb-px text-[18px] text-[#222]">{children}</div>
);

const FormatPanel = () => (
  <div className="flex w-[361px] flex-col border-l-2 border-[#dadbe0] bg-[#fbfbfb] text-[#707070]">
    <div className="flex h-[51px] items-center border-b-2 border-[#dadbe0] pb-[2px]">
      <span className="w-[317px] shrink-0 pl-[140px] text-[19.5px] font-bold">Diagram</span>
      <Cross className="size-[14px] text-[#b9c9de]" />
    </div>
    <div className="h-[222px] border-b-2 border-[#dadbe0] pl-[26px] pt-[21px]">
      <Title>View</Title>
      <div className="mt-[10px]">
        <Check on label="Grid">
          <span className="ml-[82px] flex h-[30px] w-[63px] items-center justify-end border border-[#999] bg-white pb-0.5 pr-[2px] text-[18px] text-[#222]">10 pt</span>
          <span className="ml-px mt-1 flex h-[28px] w-[18px] flex-col rounded-[4px] border-[2px] border-[#b5b5b5] text-[#888]">
            <span className="flex flex-1 items-center justify-center border-b border-[#b5b5b5]"><svg className="h-[7px] w-3" viewBox="0 0 12 7"><path d="M1 6h10L6 1z" fill="#bbb" stroke="#888" /></svg></span>
            <span className="flex flex-1 items-center justify-center"><svg className="h-[7px] w-3" viewBox="0 0 12 7"><path d="M1 1h10L6 6z" fill="#bbb" stroke="#888" /></svg></span>
          </span>
          <span className="mb-[3px] ml-2 flex h-[33px] w-[69px] items-center justify-center rounded-[5px] border-2 border-[#808080] bg-gradient-to-b from-[#eee] to-[#ddd]">
            <span className="h-[21px] w-[57px] border-2 border-black bg-[#cfcfcf]" />
          </span>
        </Check>
        <Check on label="Page View" />
        <Check label="Background">
          <span className="mb-[3px] ml-[17px] flex h-[33px] w-[84px] items-center justify-center rounded-[5px] border-2 border-[#808080] bg-gradient-to-b from-[#f5f5f5] to-[#ddd] pb-[5px] text-[18px] text-[#444]">Image</span>
        </Check>
        <Check label="Shadow" />
      </div>
    </div>
    <div className="h-[180px] border-b-2 border-[#dadbe0] pl-[26px] pt-4">
      <Title>Options</Title>
      <div className="mt-[11px]">
        <Check on label="Connection Arrows" />
        <Check on label="Connection Points" />
        <Check on label="Guides" />
      </div>
    </div>
    <div className="h-[141px] border-b-2 border-[#dadbe0] pl-[26px] pt-4">
      <Title>Paper Size</Title>
      <div className="mt-2 flex h-[25px] w-[303px] items-center border border-[#a0a0a0] bg-white text-[18px] text-black">
        <span className="ml-[6px] pt-px">A4 (210 mm x 297 mm)</span>
        <svg className="ml-auto mr-[9px] h-[9px] w-[9px]" viewBox="0 0 9 9"><path d="M0 0h9L4.500 9z" fill="#000" /></svg>
      </div>
      <div className="mt-[18px] flex h-6 items-center text-[18px]">
        <span className="mb-2 ml-[14px] flex size-[18px] items-center justify-center rounded-full border border-[#aaa] bg-[#e2e2e2]"><span className="size-[9px] rounded-full bg-[#555]" /></span>
        <span className="ml-[9px] w-[74px]">Portrait</span>
        <span className="mb-2 size-[18px] rounded-full border border-[#b0b0b0] bg-[#e2e2e2]" />
        <span className="ml-[9px]">Landscape</span>
      </div>
    </div>
    <div className="flex h-[100px] flex-col gap-[3px] border-b-2 border-[#dadbe0] pl-[26px] pt-[18px]">
      <PanelButton>Edit Data</PanelButton>
      <PanelButton>Clear Default Style</PanelButton>
    </div>
  </div>
);

const DownloadBar = () => (
  <div className="flex h-[72px] shrink-0 items-center border-t border-[#dadce0] bg-white">
    <svg className="ml-[33px] h-[22px] w-[17px]" viewBox="0 0 17 22"><path d="M.7.7h12L16.300 5v16.300H.7z" fill="#fafafa" stroke="#888" strokeWidth="1.300" /><path d="M12.500 1v4h4" fill="none" stroke="#888" /></svg>
    <span className="ml-6 w-[194px] whitespace-nowrap pt-0.5 text-[16.800px] text-[#45494d]">NetworkSecurit....drawio</span>
    <svg className="ml-[36px] h-2 w-[13px]" viewBox="0 0 13 8"><path d="M1 7.500L6.500 1.500 12 7.500" fill="none" stroke="#5f6368" strokeWidth="2" /></svg>
    <span className="ml-[27px] h-[54px] w-[1.500px] bg-[#c5c5c5]" />
    <span className="mb-0.5 ml-auto flex h-12 w-[117px] items-center justify-center rounded-[4px] border border-[#dadce0] text-[16.700px] text-[#3c4043]">Show all</span>
    <MdClose className="mb-0.5 ml-[16px] mr-4 size-[22px] text-[#5f6368]" />
  </div>
);

export default function App() {
  return (
    <div className="flex h-[1380px] w-[2160px] flex-col overflow-hidden bg-white font-['Open_Sans','Noto_Sans',sans-serif]">
      <TabStrip />
      <NavBar />
      <div className="flex shrink-0 flex-col font-['Liberation_Sans',Arial,sans-serif]">
        <Header />
        <Toolbar />
        <div className="flex h-[1047px]">
          <Sidebar />
          <div className="flex w-[19px] shrink-0 items-center justify-center gap-[2px] border-r-2 border-[#dfe0e4] bg-[#fbfbfb]">
            <span className="h-[11px] w-[1.500px] bg-[#555]" /><span className="h-[11px] w-[1.500px] bg-[#555]" />
          </div>
          <Workspace />
          <FormatPanel />
        </div>
      </div>
      <DownloadBar />
    </div>
  );
}
